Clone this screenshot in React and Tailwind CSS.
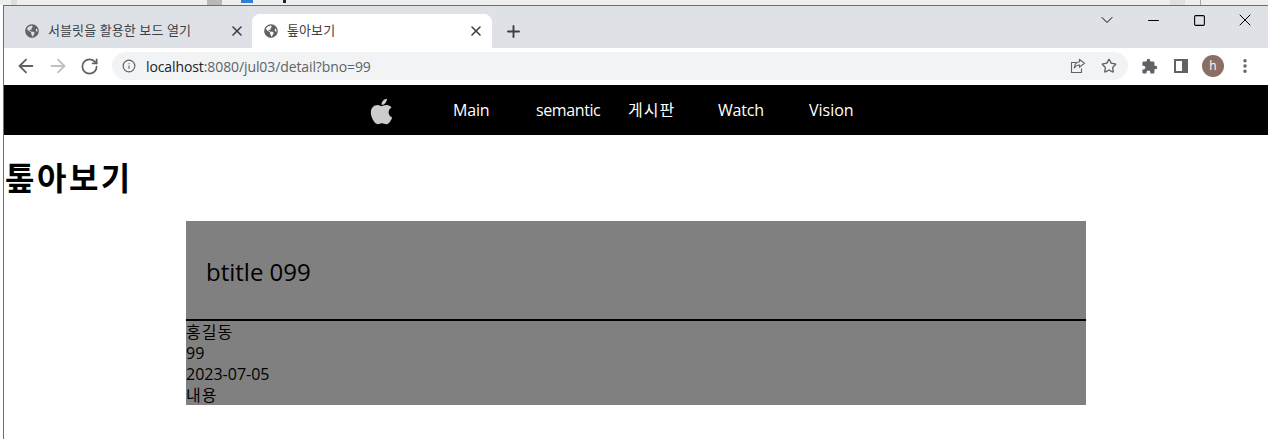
import { ArrowLeft, ArrowRight, ChevronDown, Info, Minus, MoreVertical, Plus, RotateCw, Square, Star, X } from 'lucide-react';
import { FaApple, FaGlobeAmericas } from 'react-icons/fa';
import { MdExtension } from 'react-icons/md';

const FONT = "font-['Open_Sans','Noto_Sans_CJK_KR',sans-serif]";

function Tab({ title, active }) {
  return (
    <div className={`flex h-[34px] w-[240px] items-center rounded-t-lg pl-[12px] pr-[8px] ${active ? 'bg-white' : ''}`}>
      <FaGlobeAmericas className="h-[14px] w-[14px] shrink-0 text-[#5f6368]" />
      <span className="ml-[9px] flex-1 truncate text-[13px] tracking-[0.1px] text-[#3c4043]">{title}</span>
      <X className="h-[16px] w-[16px] text-[#3c4043]" strokeWidth={2.4} />
    </div>
  );
}

function ShareIcon() {
  return (
    <svg viewBox="0 0 16 16" className="h-4 w-4" fill="none" stroke="#5f6368" strokeWidth="1.1">
      <path d="M6.5 4.5H1.5v10h10v-4" />
      <path d="M9.5 1.5l5 3.8-5 3.8V7C7 7 5.3 8 4.2 10.3 4.4 7 6.3 4.2 9.5 3.8z" />
    </svg>
  );
}

function NavLink({ children, className }) {
  return <span className={`text-[16px] text-white ${className}`}>{children}</span>;
}

function InfoRow({ children, className = '' }) {
  return <div className={`h-[21px] text-[16px] leading-[23px] text-black ${className}`}>{children}</div>;
}

export default function App() {
  return (
    <div className={`h-[439px] w-[1268px] overflow-hidden bg-white ${FONT}`}>
      {/* desktop behind the browser window */}
      <div className="flex h-[5px] bg-[#eeeeee]">
        <div className="ml-[11px] h-full w-[6px] bg-[#dcdcdc]" />
        <div className="ml-[190px] h-full w-[15px] bg-[#b8b8b8]" />
        <div className="ml-[19px] h-[3px] w-[12px] bg-[#2f7fd6]" />
        <div className="ml-[30px] h-[3px] w-[3px] bg-[#222222]" />
        <div className="ml-[884px] h-full w-[15px] bg-[#e0e0e0]" />
        <div className="ml-[15px] h-full w-px bg-[#a8a8a8]" />
      </div>

      <div className="ml-[3px] flex h-[434px] flex-col border-t border-l border-[#6e6e6e]">
        {/* tab strip */}
        <div className="relative flex h-[42px] items-end bg-[#dee1e6] pl-[9px]">
          <Tab title="서블릿을 활용한 보드 열기" />
          <div className="-ml-[1px]">
            <Tab title="톺아보기" active />
          </div>
          <Plus className="mb-[7px] ml-[12px] h-[19px] w-[19px] text-[#3c4043]" strokeWidth={2.4} />
          <div className="absolute top-0 right-0 flex h-[28px] items-center text-black">
            <div className="flex w-[46px] justify-center"><ChevronDown className="h-[20px] w-[20px]" strokeWidth={1.2} /></div>
            <div className="flex w-[46px] justify-center"><Minus className="h-[17px] w-[17px]" strokeWidth={1.4} /></div>
            <div className="flex w-[46px] justify-center"><Square className="h-[13px] w-[13px]" strokeWidth={2} /></div>
            <div className="flex w-[46px] justify-center"><X className="h-[20px] w-[20px]" strokeWidth={1.2} /></div>
          </div>
        </div>

        {/* toolbar */}
        <div className="flex h-[37px] items-center bg-white pb-[1px]">
          <div className="flex w-[108px] items-center pl-[11px]">
            <ArrowLeft className="h-[22px] w-[22px] text-[#5f6368]" strokeWidth={2} />
            <ArrowRight className="ml-[10px] h-[22px] w-[22px] text-[#bdc1c6]" strokeWidth={2} />
            <RotateCw className="ml-[11px] h-[19px] w-[19px] text-[#5f6368]" strokeWidth={2.2} />
          </div>
          <div className="flex h-[28px] w-[1016px] items-center rounded-full bg-[#f1f3f4] pl-[10px] pr-[11px]">
            <Info className="h-[14px] w-[14px] text-[#5f6368]" strokeWidth={2} />
            <span className="ml-[10px] flex-1 text-[14px] tracking-[-0.1px] text-[#5f6368]"><span className="text-[#202124]">localhost</span>:8080/jul03/detail?bno=99</span>
            <ShareIcon />
            <Star className="ml-[15px] h-[16px] w-[16px] text-[#5f6368]" strokeWidth={2} />
          </div>
          <div className="ml-[13px] flex items-center">
            <MdExtension className="h-[17px] w-[17px] text-[#5f6368]" />
            <div className="ml-[16px] flex h-[14px] w-[14px] justify-end border-2 border-[#5f6368] bg-white">
              <div className="h-full w-[4px] bg-[#5f6368]" />
            </div>
            <div className="ml-[14px] flex h-[22px] w-[22px] items-center justify-center rounded-full bg-[#8d6e63] text-[12px] text-white">h</div>
            <MoreVertical className="ml-[12px] h-[18px] w-[18px] text-[#5f6368]" strokeWidth={2.6} />
          </div>
        </div>

        {/* site nav */}
        <nav className="flex h-[50px] items-center bg-black pb-[1px]">
          <FaApple className="mt-[3px] ml-[363px] h-[29px] w-[29px] shrink-0 text-[#cccccc]" />
          <NavLink className="ml-[57px] w-[83px] tracking-[-0.2px]">Main</NavLink>
          <NavLink className="w-[92px] tracking-[-0.4px]">semantic</NavLink>
          <NavLink className="w-[90px] tracking-[1px]">게시판</NavLink>
          <NavLink className="w-[91px] tracking-[-0.2px]">Watch</NavLink>
          <NavLink>Vision</NavLink>
        </nav>

        <h1 className="mt-[22px] ml-[1px] h-[42px] text-[32px] leading-[42px] font-bold tracking-[2.5px] text-black">톺아보기</h1>

        {/* board detail */}
        <div className="mt-[22px] ml-[182px] w-[900px] bg-[#808080]">
          <div className="flex h-[100px] items-center border-b-2 border-black pl-[20px] pt-[3px] text-[24px] text-black">
            btitle 099
          </div>
          <InfoRow className="tracking-[1px]">홍길동</InfoRow>
          <InfoRow>99</InfoRow>
          <InfoRow>2023-07-05</InfoRow>
          <InfoRow className="tracking-[1px]">내용</InfoRow>
        </div>
      </div>
    </div>
  );
}
